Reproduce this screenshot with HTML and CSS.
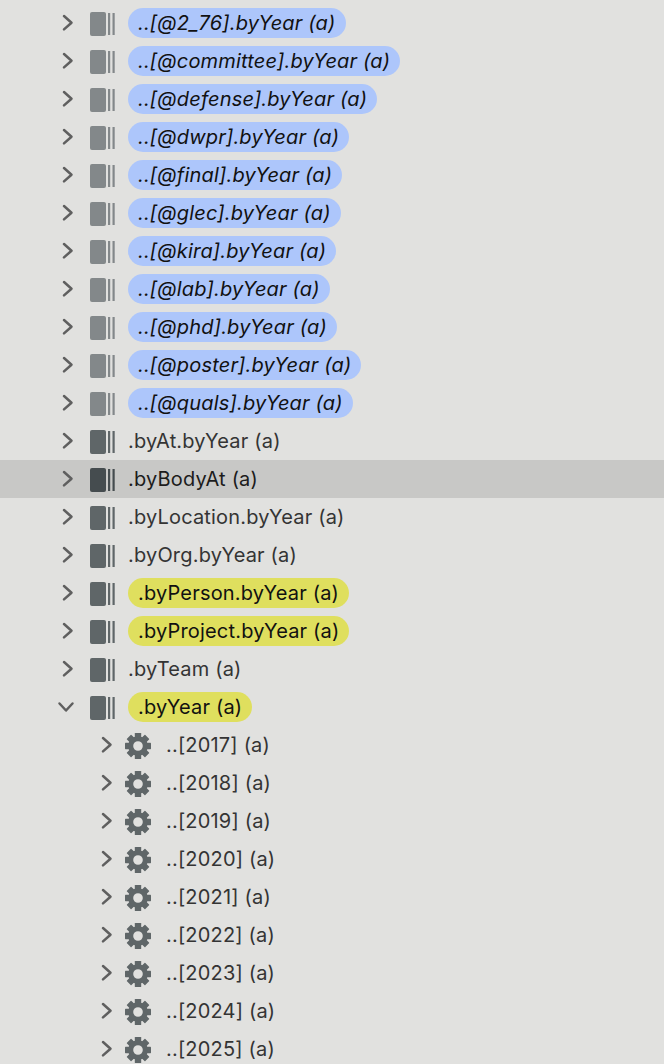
FILE: index.html
```html
<!DOCTYPE html>
<html lang="en">
<head>
<meta charset="utf-8">
<title>Tree</title>
<link rel="stylesheet" href="styles.css">
</head>
<body>
<svg class="defs" width="0" height="0" aria-hidden="true">
  <defs>
    <symbol id="closed" viewBox="0 0 16 20"><path d="M4 3 L11.5 9.700 L4 16.400" fill="none" stroke="currentColor" stroke-width="2.5" stroke-linecap="round" stroke-linejoin="round"/></symbol>
    <symbol id="open" viewBox="0 0 20 16"><path d="M3.500 4.500 L10 11.500 L16.500 4.500" fill="none" stroke="currentColor" stroke-width="2.500" stroke-linecap="round" stroke-linejoin="round"/></symbol>
    <symbol id="book" viewBox="0 0 26 26"><rect x="0" y="0" width="16" height="24" rx="2" fill="currentColor"/><rect x="18" y="1" width="2.2" height="22" fill="currentColor"/><rect x="22.500" y="1" width="2.200" height="22" fill="currentColor"/></symbol>
    <symbol id="gear" viewBox="0 0 26 26">
      <g fill="currentColor">
        <rect x="9.800" y="0" width="6.400" height="6" rx=".6"/>
        <rect x="9.800" y="0" width="6.400" height="6" rx=".6" transform="rotate(45 13 13)"/>
        <rect x="9.800" y="0" width="6.400" height="6" rx=".6" transform="rotate(90 13 13)"/>
        <rect x="9.800" y="0" width="6.400" height="6" rx=".6" transform="rotate(135 13 13)"/>
        <rect x="9.800" y="0" width="6.400" height="6" rx=".6" transform="rotate(180 13 13)"/>
        <rect x="9.800" y="0" width="6.400" height="6" rx=".6" transform="rotate(225 13 13)"/>
        <rect x="9.800" y="0" width="6.400" height="6" rx=".6" transform="rotate(270 13 13)"/>
        <rect x="9.800" y="0" width="6.400" height="6" rx=".6" transform="rotate(315 13 13)"/>
      </g>
      <circle cx="13" cy="13" r="7.300" fill="none" stroke="currentColor" stroke-width="5"/>
    </symbol>
  </defs>
</svg>
<ul class="tree">
  <li class="row dim"><svg class="chev"><use href="#closed"/></svg><svg class="ico"><use href="#book"/></svg><span class="pill blue">..[@2_76].byYear (a)</span></li>
  <li class="row dim"><svg class="chev"><use href="#closed"/></svg><svg class="ico"><use href="#book"/></svg><span class="pill blue">..[@committee].byYear (a)</span></li>
  <li class="row dim"><svg class="chev"><use href="#closed"/></svg><svg class="ico"><use href="#book"/></svg><span class="pill blue">..[@defense].byYear (a)</span></li>
  <li class="row dim"><svg class="chev"><use href="#closed"/></svg><svg class="ico"><use href="#book"/></svg><span class="pill blue">..[@dwpr].byYear (a)</span></li>
  <li class="row dim"><svg class="chev"><use href="#closed"/></svg><svg class="ico"><use href="#book"/></svg><span class="pill blue">..[@final].byYear (a)</span></li>
  <li class="row dim"><svg class="chev"><use href="#closed"/></svg><svg class="ico"><use href="#book"/></svg><span class="pill blue">..[@glec].byYear (a)</span></li>
  <li class="row dim"><svg class="chev"><use href="#closed"/></svg><svg class="ico"><use href="#book"/></svg><span class="pill blue">..[@kira].byYear (a)</span></li>
  <li class="row dim"><svg class="chev"><use href="#closed"/></svg><svg class="ico"><use href="#book"/></svg><span class="pill blue">..[@lab].byYear (a)</span></li>
  <li class="row dim"><svg class="chev"><use href="#closed"/></svg><svg class="ico"><use href="#book"/></svg><span class="pill blue">..[@phd].byYear (a)</span></li>
  <li class="row dim"><svg class="chev"><use href="#closed"/></svg><svg class="ico"><use href="#book"/></svg><span class="pill blue">..[@poster].byYear (a)</span></li>
  <li class="row dim"><svg class="chev"><use href="#closed"/></svg><svg class="ico"><use href="#book"/></svg><span class="pill blue">..[@quals].byYear (a)</span></li>
  <li class="row"><svg class="chev"><use href="#closed"/></svg><svg class="ico"><use href="#book"/></svg><span class="label">.byAt.byYear (a)</span></li>
  <li class="row selected"><svg class="chev"><use href="#closed"/></svg><svg class="ico"><use href="#book"/></svg><span class="label">.byBodyAt (a)</span></li>
  <li class="row"><svg class="chev"><use href="#closed"/></svg><svg class="ico"><use href="#book"/></svg><span class="label">.byLocation.byYear (a)</span></li>
  <li class="row"><svg class="chev"><use href="#closed"/></svg><svg class="ico"><use href="#book"/></svg><span class="label">.byOrg.byYear (a)</span></li>
  <li class="row"><svg class="chev"><use href="#closed"/></svg><svg class="ico"><use href="#book"/></svg><span class="pill yellow">.byPerson.byYear (a)</span></li>
  <li class="row"><svg class="chev"><use href="#closed"/></svg><svg class="ico"><use href="#book"/></svg><span class="pill yellow">.byProject.byYear (a)</span></li>
  <li class="row"><svg class="chev"><use href="#closed"/></svg><svg class="ico"><use href="#book"/></svg><span class="label">.byTeam (a)</span></li>
  <li class="row"><svg class="chev open"><use href="#open"/></svg><svg class="ico"><use href="#book"/></svg><span class="pill yellow">.byYear (a)</span></li>
  <li class="row child"><svg class="chev"><use href="#closed"/></svg><svg class="ico gear"><use href="#gear"/></svg><span class="label">..[2017] (a)</span></li>
  <li class="row child"><svg class="chev"><use href="#closed"/></svg><svg class="ico gear"><use href="#gear"/></svg><span class="label">..[2018] (a)</span></li>
  <li class="row child"><svg class="chev"><use href="#closed"/></svg><svg class="ico gear"><use href="#gear"/></svg><span class="label">..[2019] (a)</span></li>
  <li class="row child"><svg class="chev"><use href="#closed"/></svg><svg class="ico gear"><use href="#gear"/></svg><span class="label">..[2020] (a)</span></li>
  <li class="row child"><svg class="chev"><use href="#closed"/></svg><svg class="ico gear"><use href="#gear"/></svg><span class="label">..[2021] (a)</span></li>
  <li class="row child"><svg class="chev"><use href="#closed"/></svg><svg class="ico gear"><use href="#gear"/></svg><span class="label">..[2022] (a)</span></li>
  <li class="row child"><svg class="chev"><use href="#closed"/></svg><svg class="ico gear"><use href="#gear"/></svg><span class="label">..[2023] (a)</span></li>
  <li class="row child"><svg class="chev"><use href="#closed"/></svg><svg class="ico gear"><use href="#gear"/></svg><span class="label">..[2024] (a)</span></li>
  <li class="row child"><svg class="chev"><use href="#closed"/></svg><svg class="ico gear"><use href="#gear"/></svg><span class="label">..[2025] (a)</span></li>
</ul>
</body>
</html>
```
FILE: styles.css
```css
html, body {
  margin: 0;
  height: 100%;
  overflow: hidden;
  background: #e1e1df;
}
.defs { position: absolute; }
.tree {
  list-style: none;
  margin: 0;
  padding: 4px 0 0;
  font-family: Inter, "Liberation Sans", sans-serif;
  font-size: 20px;
  letter-spacing: 0.18px;
  color: #343434;
}
.row {
  height: 38px;
  display: flex;
  align-items: center;
  padding-left: 60px;
  box-sizing: border-box;
}
.row.child { padding-left: 99px; }
.selected { background: #c8c8c6; color: #1c1c1c; }
.chev {
  width: 16px;
  height: 20px;
  flex: none;
  margin-right: 14px;
  color: #5f5f5f;
}
.child .chev { margin-right: 10px; }
.chev.open {
  width: 20px;
  height: 16px;
  margin-left: -4px;
  margin-right: 14px;
}
.ico {
  width: 26px;
  height: 26px;
  flex: none;
  margin-right: 12px;
  color: #5f6668;
  position: relative;
  top: 2px;
}
.ico.gear { margin-right: 15px; top: 1px; }
.dim .ico { color: #83888a; }
.selected .ico { color: #454c4f; }
.pill {
  height: 30px;
  line-height: 31px;
  border-radius: 15px;
  padding: 0 10px;
  color: #111;
  white-space: nowrap;
}
.blue { background: #adc6fb; font-style: italic; }
.yellow { background: #dfdf5e; }
.label { white-space: nowrap; }
```
